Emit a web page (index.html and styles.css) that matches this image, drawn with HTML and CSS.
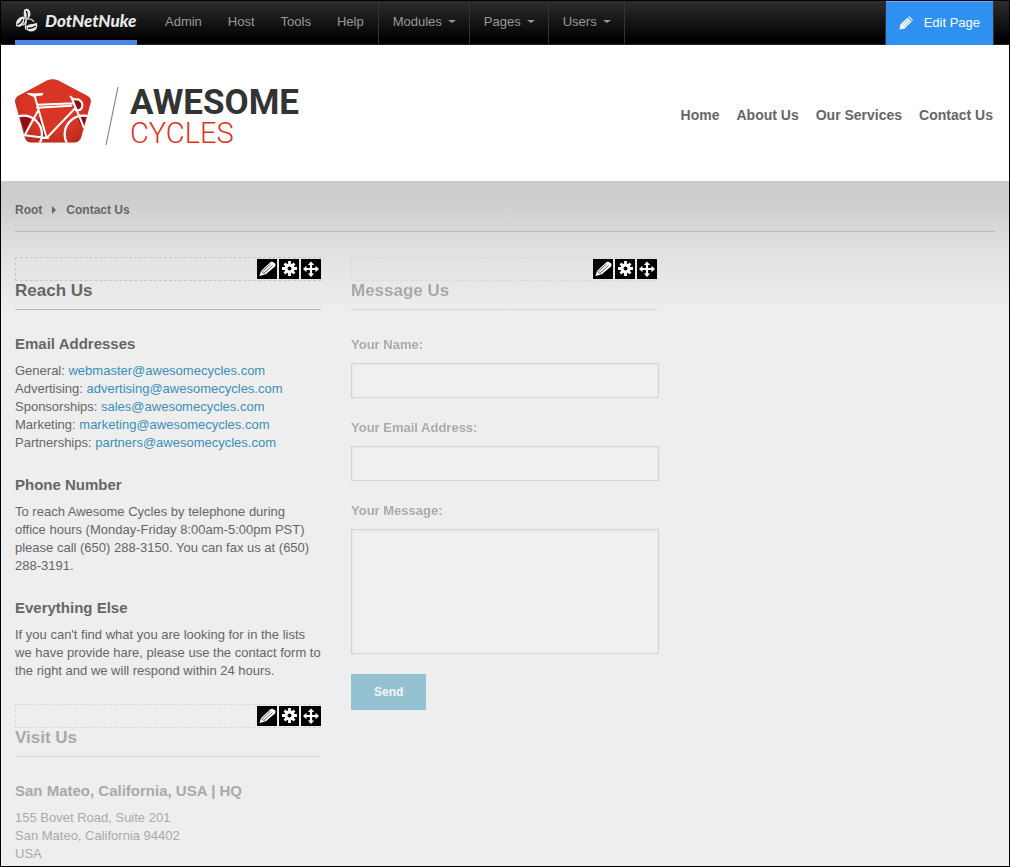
FILE: index.html
```html
<!DOCTYPE html>
<html lang="en">
<head>
<meta charset="utf-8">
<title>Contact Us - Awesome Cycles</title>
<link rel="stylesheet" href="styles.css">
</head>
<body>
<svg class="sprite" aria-hidden="true">
  <symbol id="pencil" viewBox="0 0 20 20">
    <path d="M2.500 17 4 12 13 3.500Q14.300 2.500 16 3L18.300 4.500Q19 6 18 7.500L8.500 15.500Z" fill="#fff"/>
    <path d="M5.500 12.500 13.500 5M7.200 14 15.500 6.500M4.500 12.500 8 15.500" stroke="#333" stroke-width=".8" fill="none"/>
  </symbol>
  <symbol id="gear" viewBox="0 0 20 20">
    <g stroke="#fff" stroke-width="2.800"><path d="M10.500 2v15M3 9.500h15M5.500 4.500l10 10M15.500 4.500l-10 10"/></g>
    <circle cx="10.500" cy="9.500" r="5" fill="#fff"/><circle cx="10.500" cy="9.500" r="2" fill="#000"/>
  </symbol>
  <symbol id="move" viewBox="0 0 20 20">
    <path d="M10 2.500 13.200 6H11.100V9H14.500V6.800L18 10 14.500 13.200V11.100H11.100V14.500H13.200L10 18 6.800 14.500H8.900V11.100H5.500V13.200L2 10 5.500 6.800V9H8.900V6H6.800Z" fill="#fff"/>
  </symbol>
</svg>
<div class="page">
  <div class="control-bar">
    <a class="brand" href="#">
      <svg class="brand-mark" viewBox="10 9 69 75" aria-hidden="true">
        <g fill="#e8e8e8">
          <path d="M37 15Q42 10 50 12 58 20 56 31 54 39 46 42 36 38 36 26Z"/>
          <path d="M38 35Q26 33 18 43 11 51 13 63 22 68 31 62 39 55 38 35Z"/>
          <path d="M43 64Q52 56 64 57L76 53Q79 66 71 76 58 83 47 76Z"/>
        </g>
        <path d="M44 18Q49 29 46 38M17 59Q28 56 33 43M49 69Q60 72 72 63" fill="none" stroke="#111" stroke-width="4"/>
        <path d="M37 38Q48 43 42 57 40 64 43 74M47 42Q60 40 66 49M35 60Q41 56 42 48" fill="none" stroke="#d5d5d5" stroke-width="4" stroke-linecap="round"/>
      </svg>
      <span>DotNetNuke</span>
    </a>
    <nav class="admin-links" aria-label="Administration">
      <a href="#">Admin</a><a href="#">Host</a><a href="#">Tools</a><a href="#">Help</a>
    </nav>
    <div class="admin-menus">
      <button type="button">Modules<i class="caret"></i></button>
      <button type="button">Pages<i class="caret"></i></button>
      <button type="button">Users<i class="caret"></i></button>
    </div>
    <button type="button" class="edit-page">
      <svg viewBox="0 0 14 14" aria-hidden="true"><path d="M.5 13.500 1.500 8.200 8.500 1.700 12.600 5.500 5.800 12.500Z M9.200 1 10.200.3 13.900 3.700 13.200 4.800Z" fill="#fff"/><path d="M3.500 9 9 3.500M5.200 10.700 10.700 5.200" stroke="#2e90f0" stroke-width=".6"/></svg>
      Edit Page
    </button>
  </div>

  <header class="site-header">
    <a class="logo" href="#">
      <svg class="logo-mark" viewBox="45 41 228 192" aria-hidden="true">
        <defs>
          <radialGradient id="red" cx=".5" cy=".45" r=".6"><stop offset=".6" stop-color="#d93526"/><stop offset="1" stop-color="#b52b20"/></radialGradient>
          <clipPath id="shape"><path d="M142 45Q158 38 174 45L262 91Q276 99 272 113L244 215Q239 232 222 232H94Q79 232 74 216L46 114Q42 99 55 91Z"/></clipPath>
        </defs>
        <g clip-path="url(#shape)">
          <rect x="40" y="36" width="240" height="200" fill="url(#red)"/>
          <path d="M58 150Q78 150 94 160L74 202ZM118 160 136 212 127 214Q124 184 104 168ZM232 156 264 148 250 186Q238 176 234 160ZM222 104Q240 102 244 114 244 130 229 134Z" fill="#8f0f19"/>
          <g fill="none" stroke="#fff" stroke-width="6" stroke-linecap="round" stroke-linejoin="round">
            <circle cx="70" cy="207" r="56" stroke-width="7"/>
            <circle cx="250" cy="207" r="56" stroke-width="7"/>
            <path d="M82 84Q102 88 128 84L127 89Q109 89 104 94Q92 91 82 84Z" fill="#fff" stroke-width="3"/>
            <path d="M104 92 139 215M114 118 222 114M111 127 214 121M226 128 140 218 74 210 114 136M214 96 251 185M212 94Q218 104 235 102 251 111 246 127 241 136 228 135"/>
            <path d="M128 218H146" stroke-width="4"/>
          </g>
        </g>
      </svg>
      <svg class="logo-slash" viewBox="0 0 14 60" aria-hidden="true"><path d="M13 1 1 59" stroke="#888" stroke-width="1.200"/></svg>
      <span class="logo-text"><strong>AWESOME</strong><span>CYCLES</span></span>
    </a>
    <nav class="site-nav" aria-label="Main">
      <a href="#">Home</a><a href="#">About Us</a><a href="#">Our Services</a><a href="#">Contact Us</a>
    </nav>
  </header>

  <main class="content">
    <nav class="breadcrumb" aria-label="Breadcrumb"><a href="#">Root</a><i class="arrow"></i><a href="#">Contact Us</a></nav>
    <div class="columns">
      <div class="column">
        <section class="module">
          <div class="actions">
            <button type="button" aria-label="Edit"><svg><use href="#pencil"/></svg></button>
            <button type="button" aria-label="Settings"><svg><use href="#gear"/></svg></button>
            <button type="button" aria-label="Move"><svg><use href="#move"/></svg></button>
          </div>
          <div class="module-body">
            <h2>Reach Us</h2>
            <h3>Email Addresses</h3>
            <p>General: <a href="#">webmaster@awesomecycles.com</a><br>
            Advertising: <a href="#">advertising@awesomecycles.com</a><br>
            Sponsorships: <a href="#">sales@awesomecycles.com</a><br>
            Marketing: <a href="#">marketing@awesomecycles.com</a><br>
            Partnerships: <a href="#">partners@awesomecycles.com</a></p>
            <h3>Phone Number</h3>
            <p>To reach Awesome Cycles by telephone during<br>office hours (Monday-Friday 8:00am-5:00pm PST) please call (650) 288-3150. You can fax us at (650) <span class="phone">288-3191.</span></p>
            <h3>Everything Else</h3>
            <p>If you can't find what you are looking for in the lists we have provide hare, please use the contact form to the right and we will respond within 24 hours.</p>
          </div>
        </section>
        <section class="module dimmed">
          <div class="actions">
            <button type="button" aria-label="Edit"><svg><use href="#pencil"/></svg></button>
            <button type="button" aria-label="Settings"><svg><use href="#gear"/></svg></button>
            <button type="button" aria-label="Move"><svg><use href="#move"/></svg></button>
          </div>
          <div class="module-body">
            <h2>Visit Us</h2>
            <h3>San Mateo, California, USA | HQ</h3>
            <p>155 Bovet Road, Suite 201<br>San Mateo, California 94402<br>USA</p>
          </div>
        </section>
      </div>
      <section class="module dimmed">
        <div class="actions">
          <button type="button" aria-label="Edit"><svg><use href="#pencil"/></svg></button>
          <button type="button" aria-label="Settings"><svg><use href="#gear"/></svg></button>
          <button type="button" aria-label="Move"><svg><use href="#move"/></svg></button>
        </div>
        <div class="module-body">
          <h2>Message Us</h2>
          <form class="contact-form">
            <div class="field"><label for="name">Your Name:</label><input id="name" type="text"></div>
            <div class="field"><label for="email">Your Email Address:</label><input id="email" type="email"></div>
            <div class="field"><label for="message">Your Message:</label><textarea id="message"></textarea></div>
            <button type="button" class="send">Send</button>
          </form>
        </div>
      </section>
    </div>
  </main>
</div>
</body>
</html>
```

FILE: styles.css
```css
* { box-sizing: border-box; }
body {
  margin: 0;
  background: #eee;
  color: #666;
  font: 13px/18px "Liberation Sans", Arial, sans-serif;
}
a { color: inherit; text-decoration: none; }
button { font: inherit; border: 0; padding: 0; cursor: pointer; }
h2, h3, p { margin: 0; }
.sprite { display: none; }
.page {
  min-height: 100vh;
  border: 1px solid #000;
}

/* Administration bar */
.control-bar {
  display: flex;
  height: 44px;
  padding: 0 16px 0 14px;
  background: linear-gradient(#2d2d2d, #000 92%);
  border-bottom: 1px solid #222;
  color: #999;
}
.brand {
  display: flex;
  align-items: center;
  gap: 7px;
  width: 122px;
  height: 44px;
  border-bottom: 5px solid #4a86e4;
  color: #e8e8e8;
  font: italic 900 17px/20px Lato, sans-serif;
}
.brand-mark { width: 23px; height: 25px; flex: none; }
.admin-links { display: flex; padding: 0 1px 0 15px; }
.admin-links a { padding: 12px 13px; }
.admin-menus { display: flex; border-right: 1px solid #333; }
.admin-menus button {
  display: flex;
  align-items: center;
  gap: 6px;
  padding: 0 13px 2px 14px;
  border-left: 1px solid #333;
  background: none;
  color: inherit;
}
.caret {
  border: 4px solid transparent;
  border-top: 3px solid #999;
  border-bottom: 0;
}
.edit-page {
  display: flex;
  align-items: center;
  gap: 11px;
  height: 44px;
  margin-left: auto;
  padding: 0 13px;
  background: #2e90f0;
  box-shadow: inset 0 1px #68aff4, 1px 0 #333, -1px 0 #333;
  color: #fff;
}
.edit-page svg { width: 14px; height: 14px; }

/* Site header */
.site-header {
  display: flex;
  align-items: center;
  justify-content: space-between;
  height: 136px;
  padding: 0 16px 0 14px;
  background: #fff;
}
.logo { display: flex; align-items: center; }
.logo-mark { width: 76px; height: 64px; margin-bottom: 4px; }
.logo-slash { width: 14px; height: 60px; margin: 6px 11px 0 14px; }
.logo-text {
  display: flex;
  flex-direction: column;
  padding-top: 9px;
  color: #d93526;
  font: 300 29px/30px Roboto, sans-serif;
}
.logo-text strong { color: #333; font-weight: 700; font-size: 35px; line-height: 31px; }
.site-nav { display: flex; gap: 17px; padding-top: 4px; font-size: 14px; font-weight: 700; }

/* Page content */
.content {
  padding: 0 14px 3px;
  background: linear-gradient(#cacaca, #cecece 22px, #e2e2e2 75px, #eee 130px);
}
.breadcrumb {
  display: flex;
  align-items: center;
  gap: 10px;
  height: 51px;
  padding-top: 7px;
  border-bottom: 1px solid #bbb;
  font-size: 12px;
  font-weight: 700;
}
.arrow {
  border: 4px solid transparent;
  border-left-color: #666;
  border-right: 0;
}
.columns {
  display: grid;
  grid-template-columns: repeat(3, 1fr);
  gap: 30px;
  padding: 25px 2px 0 0;
}
.module + .module { margin-top: 24px; }
.actions {
  display: flex;
  justify-content: flex-end;
  gap: 2px;
  height: 24px;
  padding-top: 1px;
  border: 1px dashed #c6c6c6;
  border-right: 0;
}
.actions button { width: 20px; height: 20px; background: #000; }
.actions svg { display: block; width: 20px; height: 20px; }
.dimmed .actions { border-color: #d9d9d9; }
.dimmed .module-body { opacity: .5; }
h2 { padding: 1px 0 9px; border-bottom: 1px solid #bbb; font-size: 17px; line-height: 18px; }
h3 { margin: 23px 0 8px; font-size: 15px; line-height: 20px; }
h2 + h3 { margin-top: 24px; }
p a { color: #3a8fb7; }
.phone { white-space: nowrap; }

/* Contact form */
.contact-form { display: grid; gap: 20px; margin: 25px -2px 0 0; }
.field { display: grid; gap: 9px; }
.field label { padding-top: 1px; font-weight: 700; }
.field input, .field textarea {
  width: 100%;
  height: 35px;
  padding: 8px;
  border: 1px solid #bbb;
  background: #f2f2f2;
  box-shadow: inset 1px 1px 2px #ddd;
  font: inherit;
}
.field textarea { height: 125px; resize: none; }
.send {
  justify-self: start;
  padding: 9px 23px;
  background: #3b96b5;
  color: #fff;
  font-size: 12px;
  font-weight: 700;
}
```
